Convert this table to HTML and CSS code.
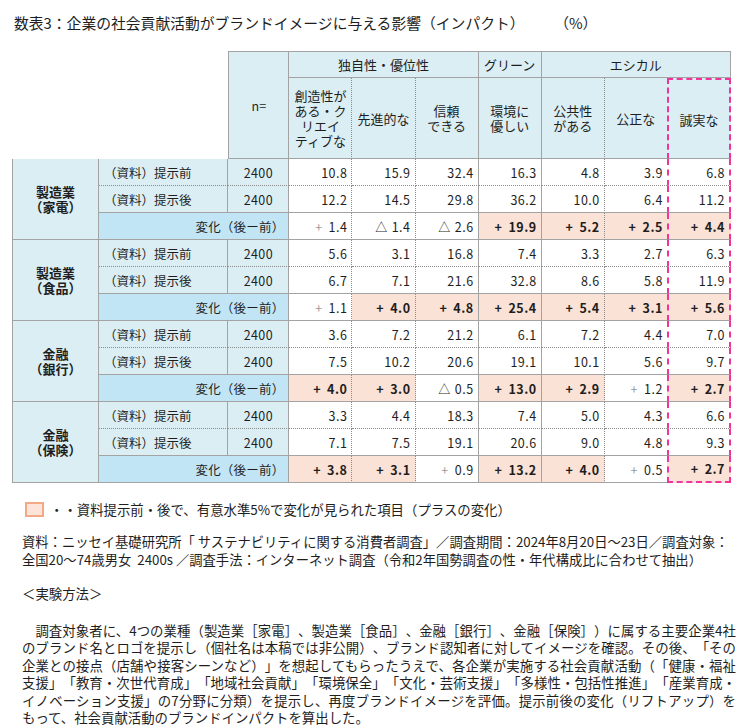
FILE: index.html
```html
<!DOCTYPE html>
<html lang="ja">
<head>
<meta charset="utf-8">
<title>数表3</title>
<link rel="stylesheet" href="styles.css">
</head>
<body>
<div class="page">
  <h1 class="title">数表3：企業の社会貢献活動がブランドイメージに与える影響（インパクト）　　（%）</h1>

  <table class="tbl">
    <colgroup>
      <col class="c-group"><col class="c-label"><col class="c-n">
      <col class="c-d"><col class="c-d"><col class="c-d"><col class="c-d"><col class="c-d"><col class="c-d6"><col class="c-d7">
    </colgroup>
    <thead>
      <tr class="h1">
        <th class="blank" colspan="2" rowspan="2"></th>
        <th class="hn" rowspan="2">n=</th>
        <th class="hg" colspan="3">独自性・優位性</th>
        <th class="hg">グリーン</th>
        <th class="hg hg-last" colspan="3">エシカル</th>
      </tr>
      <tr class="h2">
        <th class="hs dot">創造性が<br>ある・ク<br>リエイ<br>ティブな</th>
        <th class="hs dot">先進的な</th>
        <th class="hs">信頼<br>できる</th>
        <th class="hs">環境に<br>優しい</th>
        <th class="hs dot">公共性<br>がある</th>
        <th class="hs pre-pink">公正な</th>
        <th class="hs pink">誠実な</th>
      </tr>
    </thead>
    <tbody>
      <!-- 製造業（家電） -->
      <tr class="r-a">
        <td class="grp" rowspan="3">製造業<br>（家電）</td>
        <td class="lbl">（資料）提示前</td><td class="n">2400</td>
        <td class="v dot">10.8</td><td class="v dot">15.9</td><td class="v">32.4</td><td class="v">16.3</td><td class="v dot">4.8</td><td class="v pre-pink">3.9</td><td class="v pink">6.8</td>
      </tr>
      <tr class="r-b">
        <td class="lbl">（資料）提示後</td><td class="n">2400</td>
        <td class="v dot">12.2</td><td class="v dot">14.5</td><td class="v">29.8</td><td class="v">36.2</td><td class="v dot">10.0</td><td class="v pre-pink">6.4</td><td class="v pink">11.2</td>
      </tr>
      <tr class="r-c">
        <td class="chg" colspan="2">変化（後ー前）</td>
        <td class="v dot"><span class="sg">+</span>1.4</td>
        <td class="v dot"><span class="tri">△</span>1.4</td>
        <td class="v"><span class="tri">△</span>2.6</td>
        <td class="v hi"><span class="sg">+</span>19.9</td>
        <td class="v dot hi"><span class="sg">+</span>5.2</td>
        <td class="v pre-pink hi"><span class="sg">+</span>2.5</td>
        <td class="v pink hi"><span class="sg">+</span>4.4</td>
      </tr>

      <!-- 製造業（食品） -->
      <tr class="r-a">
        <td class="grp" rowspan="3">製造業<br>（食品）</td>
        <td class="lbl">（資料）提示前</td><td class="n">2400</td>
        <td class="v dot">5.6</td><td class="v dot">3.1</td><td class="v">16.8</td><td class="v">7.4</td><td class="v dot">3.3</td><td class="v pre-pink">2.7</td><td class="v pink">6.3</td>
      </tr>
      <tr class="r-b">
        <td class="lbl">（資料）提示後</td><td class="n">2400</td>
        <td class="v dot">6.7</td><td class="v dot">7.1</td><td class="v">21.6</td><td class="v">32.8</td><td class="v dot">8.6</td><td class="v pre-pink">5.8</td><td class="v pink">11.9</td>
      </tr>
      <tr class="r-c">
        <td class="chg" colspan="2">変化（後ー前）</td>
        <td class="v dot"><span class="sg">+</span>1.1</td>
        <td class="v dot hi"><span class="sg">+</span>4.0</td>
        <td class="v hi"><span class="sg">+</span>4.8</td>
        <td class="v hi"><span class="sg">+</span>25.4</td>
        <td class="v dot hi"><span class="sg">+</span>5.4</td>
        <td class="v pre-pink hi"><span class="sg">+</span>3.1</td>
        <td class="v pink hi"><span class="sg">+</span>5.6</td>
      </tr>

      <!-- 金融（銀行） -->
      <tr class="r-a">
        <td class="grp" rowspan="3">金融<br>（銀行）</td>
        <td class="lbl">（資料）提示前</td><td class="n">2400</td>
        <td class="v dot">3.6</td><td class="v dot">7.2</td><td class="v">21.2</td><td class="v">6.1</td><td class="v dot">7.2</td><td class="v pre-pink">4.4</td><td class="v pink">7.0</td>
      </tr>
      <tr class="r-b">
        <td class="lbl">（資料）提示後</td><td class="n">2400</td>
        <td class="v dot">7.5</td><td class="v dot">10.2</td><td class="v">20.6</td><td class="v">19.1</td><td class="v dot">10.1</td><td class="v pre-pink">5.6</td><td class="v pink">9.7</td>
      </tr>
      <tr class="r-c">
        <td class="chg" colspan="2">変化（後ー前）</td>
        <td class="v dot hi"><span class="sg">+</span>4.0</td>
        <td class="v dot hi"><span class="sg">+</span>3.0</td>
        <td class="v"><span class="tri">△</span>0.5</td>
        <td class="v hi"><span class="sg">+</span>13.0</td>
        <td class="v dot hi"><span class="sg">+</span>2.9</td>
        <td class="v pre-pink"><span class="sg">+</span>1.2</td>
        <td class="v pink hi"><span class="sg">+</span>2.7</td>
      </tr>

      <!-- 金融（保険） -->
      <tr class="r-a">
        <td class="grp" rowspan="3">金融<br>（保険）</td>
        <td class="lbl">（資料）提示前</td><td class="n">2400</td>
        <td class="v dot">3.3</td><td class="v dot">4.4</td><td class="v">18.3</td><td class="v">7.4</td><td class="v dot">5.0</td><td class="v pre-pink">4.3</td><td class="v pink">6.6</td>
      </tr>
      <tr class="r-b">
        <td class="lbl">（資料）提示後</td><td class="n">2400</td>
        <td class="v dot">7.1</td><td class="v dot">7.5</td><td class="v">19.1</td><td class="v">20.6</td><td class="v dot">9.0</td><td class="v pre-pink">4.8</td><td class="v pink">9.3</td>
      </tr>
      <tr class="r-c last">
        <td class="chg" colspan="2">変化（後ー前）</td>
        <td class="v dot hi"><span class="sg">+</span>3.8</td>
        <td class="v dot hi"><span class="sg">+</span>3.1</td>
        <td class="v"><span class="sg">+</span>0.9</td>
        <td class="v hi"><span class="sg">+</span>13.2</td>
        <td class="v dot hi"><span class="sg">+</span>4.0</td>
        <td class="v pre-pink"><span class="sg">+</span>0.5</td>
        <td class="v pink hi"><span class="sg">+</span>2.7</td>
      </tr>
    </tbody>
  </table>

  <div class="legend">
    <span class="swatch"></span>
    <span class="legend-text">・・資料提示前・後で、有意水準5%で変化が見られた項目（プラスの変化）</span>
  </div>

  <p class="source">資料：ニッセイ基礎研究所「 サステナビリティに関する消費者調査」／調査期間：2024年8月20日～23日／調査対象：<br>全国20～74歳男女&nbsp; 2400s ／調査手法：インターネット調査（令和2年国勢調査の性・年代構成比に合わせて抽出）</p>

  <h2 class="method">＜実験方法＞</h2>

  <p class="body">調査対象者に、4つの業種（製造業［家電］、製造業［食品］、金融［銀行］、金融［保険］）に属する主要企業4社のブランド名とロゴを提示し（個社名は本稿では非公開）、ブランド認知者に対してイメージを確認。その後、「その企業との接点（店舗や接客シーンなど）」を想起してもらったうえで、各企業が実施する社会貢献活動（「健康・福祉支援」「教育・次世代育成」「地域社会貢献」「環境保全」「文化・芸術支援」「多様性・包括性推進」「産業育成・イノベーション支援」の7分野に分類）を提示し、再度ブランドイメージを評価。提示前後の変化（リフトアップ）をもって、社会貢献活動のブランドインパクトを算出した。</p>
</div>
</body>
</html>
```

FILE: styles.css
```css
html, body {
  margin: 0;
  padding: 0;
  background: #ffffff;
}

body {
  font-family: "Noto Sans CJK JP", "Noto Sans", sans-serif;
  color: #1e1e1e;
  text-spacing-trim: space-all;
}

.page {
  padding: 13px 0 0 0;
  width: 746px;
}

.title {
  margin: 0 0 0 14px;
  font-size: 14.8px;
  line-height: 20px;
  font-weight: normal;
}

/* ---------- table ---------- */
.tbl {
  margin: 18px 0 0 12px;
  border-collapse: separate;
  border-spacing: 0;
  table-layout: fixed;
  width: 719px;
  font-size: 12.5px;
}

.c-group { width: 87px; }
.c-label { width: 129px; }
.c-n { width: 61px; }
.c-d { width: 63px; }
.c-d6 { width: 62px; }
.c-d7 { width: 64px; }

:where(.tbl th, .tbl td) {
  padding: 0;
  border: 0;
  font-weight: normal;
  box-sizing: border-box;
}

.h1 { height: 27px; }
.h2 { height: 81px; }
.r-a, .r-b, .r-c { height: 27px; }

.blank {
  background: #ffffff;
}

.hn {
  background: #dbeef4;
  border: 1px solid #a3a3a3;
  font-size: 12.5px;
  text-align: center;
}

.hg {
  background: #dbeef4;
  border-top: 1px solid #a3a3a3;
  border-right: 1px solid #a3a3a3;
  border-bottom: 1px solid #a3a3a3;
  font-size: 13px;
  text-align: center;
}

.hs {
  background: #dbeef4;
  border-right: 1px solid #a3a3a3;
  border-bottom: 1px solid #a3a3a3;
  font-size: 13px;
  line-height: 15px;
  text-align: center;
  vertical-align: middle;
}

.grp {
  background: #dbeef4;
  border-left: 1px solid #a3a3a3;
  border-right: 1px solid #a3a3a3;
  border-bottom: 1px solid #a3a3a3;
  font-size: 13px;
  line-height: 15.5px;
  font-weight: bold;
  text-align: center;
  vertical-align: middle;
}

.lbl {
  background: #dbeef4;
  border-right: 1px solid #a3a3a3;
  padding-left: 5px;
  text-align: left;
  white-space: nowrap;
}

.n {
  background: #dbeef4;
  border-right: 1px solid #a3a3a3;
  text-align: center;
  font-size: 12.5px;
  letter-spacing: 0.4px;
}

.chg {
  background: #c2e5f5;
  border-right: 1px solid #a3a3a3;
  border-bottom: 1px solid #a3a3a3;
  text-align: right;
  padding-right: 4px;
  letter-spacing: 0.2px;
}

.v {
  background: #ffffff;
  border-right: 1px solid #a3a3a3;
  text-align: right;
  padding-right: 4px;
  font-size: 12.5px;
  letter-spacing: 0.5px;
  white-space: nowrap;
}

.r-a .lbl, .r-a .n, .r-a .v {
  border-bottom: 1px dotted #8c8c8c;
}

.r-b .lbl, .r-b .n, .r-b .v,
.r-c .v {
  border-bottom: 1px solid #a3a3a3;
}

.tbl .dot {
  border-right: 1px dotted #8c8c8c;
}

.tbl .pre-pink {
  border-right: 0;
}

.tbl .pink {
  border-left: 2px dashed #f0349a;
  border-right: 2px dashed #f0349a;
}

.tbl .hs.pink {
  border-top: 2px dashed #f0349a;
}

.tbl .r-c.last .v.pink {
  border-bottom: 2px dashed #f0349a;
}

.tbl .v.hi {
  background: #fbe2d6;
  font-weight: bold;
}

.sg {
  color: #9a9a9a;
  margin-right: 6px;
}

.v.hi .sg {
  color: #1e1e1e;
}

.tri {
  margin-right: 4px;
  font-size: 12px;
}

/* ---------- notes ---------- */
.legend {
  display: flex;
  align-items: center;
  gap: 6px;
  margin: 19px 0 0 25px;
  height: 14px;
}

.swatch {
  display: block;
  width: 15px;
  height: 11px;
  background: #fde4d9;
  border: 2px solid #f3a985;
}

.legend-text {
  font-size: 13.4px;
  line-height: 14px;
}

.source {
  margin: 17px 0 0 22px;
  font-size: 13.3px;
  line-height: 17.5px;
  white-space: nowrap;
}

.method {
  margin: 17px 0 0 22px;
  font-size: 13.4px;
  line-height: 17.5px;
  font-weight: normal;
}

.body {
  margin: 19px 0 0 22px;
  width: 714px;
  font-size: 13.4px;
  line-height: 17.6px;
  text-indent: 1em;
  text-align: justify;
}
```
